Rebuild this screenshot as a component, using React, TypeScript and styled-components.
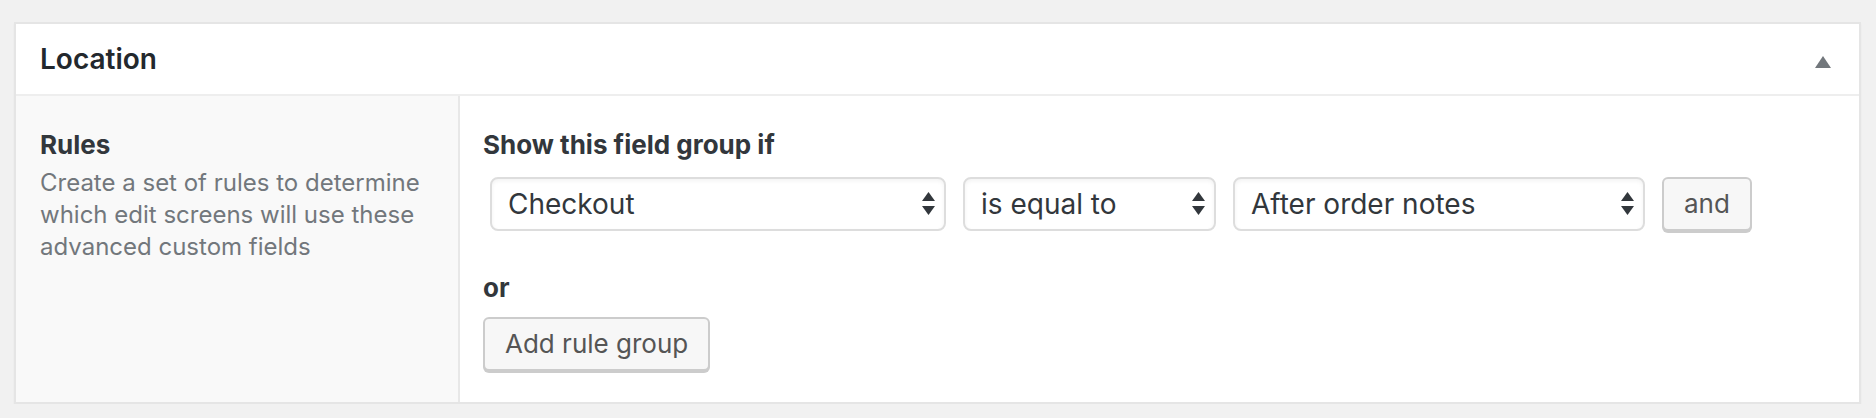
import React from "react";
import styled, { createGlobalStyle } from "styled-components";

const GlobalStyle = createGlobalStyle`
  html, body {
    margin: 0;
    padding: 0;
    background: #f1f1f1;
    font-family: Inter, "Noto Sans", "Liberation Sans", sans-serif;
  }
  * { box-sizing: border-box; }
`;

const Postbox = styled.section`
  margin: 22px 15px 0 14px;
  background: #fff;
  border: 2px solid #e5e5e5;
  box-shadow: 0 2px 2px rgba(0, 0, 0, 0.04);
`;

const Header = styled.header`
  height: 72px;
  display: flex;
  align-items: center;
  justify-content: space-between;
  padding: 0 28px 0 24px;
  border-bottom: 2px solid #eeeeee;
`;

const Title = styled.h2`
  margin: 0;
  font-size: 28px;
  font-weight: 600;
  line-height: 40px;
  color: #23282d;
`;

const Toggle = styled.svg`
  width: 16px;
  height: 12px;
  margin-top: 6px;
  display: block;
`;

const Body = styled.div`
  display: flex;
  align-items: stretch;
`;

const LabelCol = styled.div`
  width: 444px;
  flex: none;
  background: #f9f9f9;
  border-right: 2px solid #e8e8e8;
  padding: 30px 24px;
`;

const InputCol = styled.div`
  flex: 1;
  padding: 30px 23px 29px;
  display: flex;
  flex-direction: column;
  align-items: flex-start;
`;

const Label = styled.div`
  font-size: 26px;
  font-weight: 700;
  line-height: 38px;
  color: #32373c;
`;

const Description = styled.p`
  margin: 3px 0 0;
  font-size: 24px;
  line-height: 32px;
  color: #72777c;
`;

const Heading = styled.h4<{ $gap?: number }>`
  margin: ${(p) => p.$gap ?? 0}px 0 0;
  font-size: 26px;
  font-weight: 700;
  line-height: 38px;
  color: #32373c;
`;

const RuleRow = styled.div`
  display: flex;
  align-items: flex-start;
  gap: 17px;
  margin: 13px 0 0 7px;
`;

const SelectBox = styled.div<{ $w: number }>`
  width: ${(p) => p.$w}px;
  height: 54px;
  display: flex;
  align-items: center;
  justify-content: space-between;
  padding: 0 9px 0 16px;
  background: #fff;
  border: 2px solid #dddddd;
  border-radius: 8px;
  box-shadow: inset 0 2px 4px rgba(0, 0, 0, 0.05);
  font-size: 28px;
  color: #32373c;
  white-space: nowrap;
`;

const Arrows = styled.svg`
  width: 13px;
  height: 24px;
  flex: none;
  display: block;
`;

const Button = styled.button<{ $gap?: number; $bottom?: number }>`
  height: 54px;
  margin: ${(p) => p.$gap ?? 0}px 0 ${(p) => p.$bottom ?? 0}px;
  padding: 0 20px;
  background: #f7f7f7;
  border: 2px solid #cccccc;
  border-radius: 6px;
  box-shadow: 0 2px 0 #cccccc;
  font-family: inherit;
  font-size: 26px;
  color: #555555;
  line-height: 1;
  cursor: pointer;
`;

const SelectField = ({ value, width }: { value: string; width: number }) => (
  <SelectBox $w={width}>
    <span>{value}</span>
    <Arrows viewBox="0 0 13 24">
      <polygon points="6.5,0 13,9 0,9" fill="#32373c" />
      <polygon points="0,14 13,14 6.5,23" fill="#32373c" />
    </Arrows>
  </SelectBox>
);

export default function App() {
  return (
    <>
      <GlobalStyle />
      <Postbox>
        <Header>
          <Title>Location</Title>
          <Toggle viewBox="0 0 16 12">
            <polygon points="8,0 16,12 0,12" fill="#72777c" />
          </Toggle>
        </Header>
        <Body>
          <LabelCol>
            <Label>Rules</Label>
            <Description>
              Create a set of rules to determine which edit screens will use
              these advanced custom fields
            </Description>
          </LabelCol>
          <InputCol>
            <Heading>Show this field group if</Heading>
            <RuleRow>
              <SelectField value="Checkout" width={456} />
              <SelectField value="is equal to" width={253} />
              <SelectField value="After order notes" width={412} />
              <Button>and</Button>
            </RuleRow>
            <Heading $gap={38}>or</Heading>
            <Button $gap={10} $bottom={2}>Add rule group</Button>
          </InputCol>
        </Body>
      </Postbox>
    </>
  );
}
